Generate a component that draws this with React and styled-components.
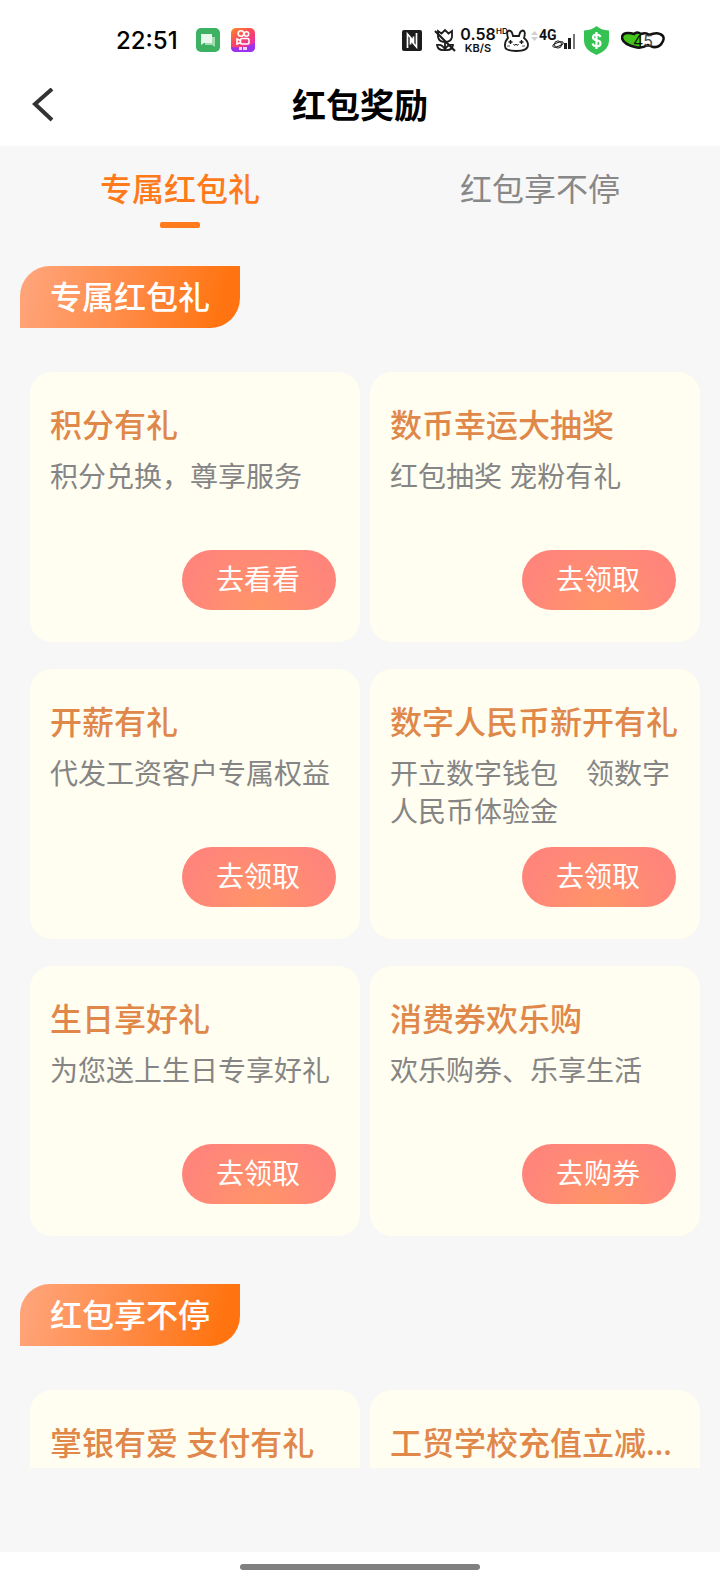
import React, { useState } from 'react';
import styled, { createGlobalStyle } from 'styled-components';

const exclusiveGifts = [
  { title: '积分有礼', desc: '积分兑换，尊享服务', action: '去看看' },
  { title: '数币幸运大抽奖', desc: '红包抽奖 宠粉有礼', action: '去领取' },
  { title: '开薪有礼', desc: '代发工资客户专属权益', action: '去领取' },
  { title: '数字人民币新开有礼', desc: '开立数字钱包　领数字人民币体验金', action: '去领取' },
  { title: '生日享好礼', desc: '为您送上生日专享好礼', action: '去领取' },
  { title: '消费券欢乐购', desc: '欢乐购券、乐享生活', action: '去购券' },
];

const endlessGifts = [
  { title: '掌银有爱 支付有礼' },
  { title: '工贸学校充值立减…' },
];

const tabs = ['专属红包礼', '红包享不停'];

const ChatIcon = () => (
  <svg width="24" height="24" viewBox="0 0 24 24" aria-hidden="true">
    <rect width="24" height="24" rx="5" fill="#3db162" />
    <path d="M9 9h10v10l-3-2H9z" fill="#a4dbb3" />
    <path d="M5 6h11v9H8l-3 2z" fill="#e9f8ec" />
  </svg>
);

const VideoIcon = () => (
  <svg width="24" height="24" viewBox="0 0 24 24" aria-hidden="true">
    <defs>
      <linearGradient id="video" x1="0" y1="0" x2="0.7" y2="1">
        <stop offset="0" stopColor="#ff8a24" />
        <stop offset="0.5" stopColor="#fb4560" />
        <stop offset="1" stopColor="#e02cc0" />
      </linearGradient>
    </defs>
    <rect width="24" height="24" rx="5" fill="url(#video)" />
    <path d="M0 19q14 2 24-4v4q0 5-5 5H5q-5 0-5-5z" fill="#9b32ec" />
    <g fill="none" stroke="#fff" strokeWidth="1.6">
      <circle cx="10" cy="5.5" r="2.8" />
      <circle cx="15.5" cy="6" r="2.2" />
      <rect x="9.5" y="10.5" width="8.5" height="5.5" rx="1.5" />
      <path d="M9.5 12.5L6 11v5l3.500-1.500" />
    </g>
    <path d="M8 19h3v3H8zM12 19h4v3h-4z" fill="#efd4ff" />
  </svg>
);

const NfcIcon = () => (
  <svg width="20" height="21" viewBox="0 0 20 21" aria-hidden="true">
    <rect width="20" height="21" rx="2" fill="#1c1c1c" />
    <path d="M5.500 18V4l6 7V6.500M14.500 3v14l-6-7v4.500" fill="none" stroke="#fff" strokeWidth="1.700" />
  </svg>
);

const FlowerIcon = () => (
  <svg width="22" height="24" viewBox="0 0 22 24" fill="none" stroke="#1c1c1c" strokeWidth="1.8" aria-hidden="true">
    <path d="M4 3l3.500 2.500L11 2l3.500 3.500L18 3v6q-1 5-7 5t-7-5zM11 14v8M11 22q-7 1-8-5 6-1 8 5zM11 22q7 1 8-5-6-1-8 5z" />
    <path d="M1 3l20 20" strokeWidth="2.200" />
  </svg>
);

const BunnyIcon = () => (
  <svg width="34" height="26" viewBox="0 0 34 26" fill="none" stroke="#1c1c1c" strokeWidth="1.800" aria-hidden="true">
    <path d="M13 11q-2-7 1-7.500 3 0 4 5.500h6q1-5.500 4-5.500 3 .5 1 7.500 4 3 4 7 0 6-12 6T10 18q0-4 3-7z" />
    <path d="M15.500 13v4M13.500 15h4M26.500 13v4M24.500 15h4" strokeWidth="1.400" />
    <path d="M18.500 17l1.200 1.500L21 17l1.300 1.500 1.200-1.500" strokeWidth="1" />
    <path d="M12 19h3M27 19h3" stroke="#aaa" />
  </svg>
);

const SignalIcon = () => (
  <svg width="44" height="28" viewBox="0 0 44 28" aria-hidden="true">
    <path d="M0 9l3.500-4L7 9zM0 11l3.500 4L7 11z" fill="#cfcfcf" />
    <g fill="none" stroke="#1c1c1c" strokeWidth="1">
      <circle cx="27" cy="18.500" r="3.600" />
      <ellipse cx="27" cy="18.500" rx="5.500" ry="1.800" transform="rotate(-20 27 18.500)" />
    </g>
    <path d="M33 17h3v6h-3zM37 12h3v11h-3z" fill="#1c1c1c" />
    <path d="M42 8h2v15h-2z" fill="#777" />
  </svg>
);

const ShieldIcon = () => (
  <svg width="27" height="29" viewBox="0 0 27 29" aria-hidden="true">
    <path d="M13.500 0Q18 4 26 4.500V15q0 9-12.500 14Q1 24 1 15V4.500Q9 4 13.500 0z" fill="#35c253" />
    <path d="M17.500 11q-1-2.500-4-2.500-3.500 0-3.500 2.800 0 2.200 3.500 2.900 4 .8 4 3.200 0 2.900-4 2.900-3.200 0-4-2.800M13.500 6v17" fill="none" stroke="#fff" strokeWidth="2.200" />
  </svg>
);

const shell = 'M14 16Q2 13 1 7q0-5 6-5 3 0 6 1 3-3 7 0 5-2 8 1 7-3 11-1 5 2 3 7-3 7-10 6-3-1-5-2-7 4-13 2z';

const BatteryIcon = () => (
  <svg width="44" height="19" viewBox="0 0 44 19" aria-hidden="true">
    <defs>
      <clipPath id="charge"><path d="M0 0h20v19H0z" /></clipPath>
    </defs>
    <path d={shell} fill="#fff" />
    <path d={shell} fill="#44c51b" clipPath="url(#charge)" />
    <path d={shell} fill="none" stroke="#111" strokeWidth="2.500" />
  </svg>
);

const GiftCard = ({ title, desc, action }) => (
  <Card>
    <CardTitle>{title}</CardTitle>
    {desc && <CardDesc>{desc}</CardDesc>}
    {action && <CardButton type="button">{action}</CardButton>}
  </Card>
);

const App = () => {
  const [active, setActive] = useState(0);

  return (
    <Page>
      <GlobalStyle />
      <StatusBar>
        <StatusLeft>
          <Clock>22:51</Clock>
          <ChatIcon />
          <VideoIcon />
        </StatusLeft>
        <StatusRight>
          <NfcIcon />
          <StatusItem $gap={12}><FlowerIcon /></StatusItem>
          <Speed>
            <SpeedValue>0.58</SpeedValue>
            <SpeedUnit>KB/S</SpeedUnit>
          </Speed>
          <StatusItem>
            <BunnyIcon />
            <Hd>HD</Hd>
          </StatusItem>
          <StatusItem $gap={2}>
            <SignalIcon />
            <Network>4G</Network>
          </StatusItem>
          <StatusItem $gap={8}><ShieldIcon /></StatusItem>
          <StatusItem $gap={11}>
            <BatteryIcon />
            <Charge>4<ChargeRest>5</ChargeRest></Charge>
          </StatusItem>
        </StatusRight>
      </StatusBar>

      <Header>
        <BackButton type="button" aria-label="返回">
          <svg width="24" height="34" viewBox="0 0 24 34" fill="none" stroke="#333" strokeWidth="4" aria-hidden="true">
            <path d="M22 1L5 16l17 16" />
          </svg>
        </BackButton>
        <Title>红包奖励</Title>
      </Header>

      <Tabs>
        {tabs.map((tab, i) => (
          <Tab key={tab} type="button" $active={i === active} onClick={() => setActive(i)}>
            {tab}
          </Tab>
        ))}
      </Tabs>

      <Content>
        <Section>
          <SectionLabel>专属红包礼</SectionLabel>
          <Grid>
            {exclusiveGifts.map((gift) => <GiftCard key={gift.title} {...gift} />)}
          </Grid>
        </Section>
        <Section>
          <SectionLabel>红包享不停</SectionLabel>
          <Grid>
            {endlessGifts.map((gift) => <GiftCard key={gift.title} {...gift} />)}
          </Grid>
        </Section>
      </Content>

      <HomeBar>
        <HomeHandle />
      </HomeBar>
    </Page>
  );
};

const GlobalStyle = createGlobalStyle`
  * {
    box-sizing: border-box;
  }

  body {
    margin: 0;
    font-family: "Noto Sans", "Noto Sans CJK SC", sans-serif;
    background: #f7f7f7;
  }

  button {
    font-family: inherit;
    border: 0;
    padding: 0;
    background: none;
    cursor: pointer;
  }

  svg {
    display: block;
    flex: none;
  }
`;

const Page = styled.div`
  height: 100vh;
  display: flex;
  flex-direction: column;
  background: #f7f7f7;
`;

const StatusBar = styled.div`
  display: flex;
  justify-content: space-between;
  align-items: center;
  height: 64px;
  flex: none;
  padding: 16px 55px 0 116px;
  background: #fff;
  font-family: Inter, sans-serif;
  color: #111;
`;

const StatusLeft = styled.div`
  display: flex;
  align-items: center;
  gap: 11px;
`;

const Clock = styled.time`
  width: 69px;
  padding-top: 2px;
  font-size: 24px;
  font-weight: 500;
  line-height: 30px;
  color: #000;
`;

const StatusRight = styled.div`
  display: flex;
  align-items: center;
`;

const StatusItem = styled.div`
  position: relative;
  margin-left: ${({ $gap }) => $gap || 0}px;
`;

const Speed = styled.div`
  width: 34px;
  margin-left: 5px;
  display: flex;
  flex-direction: column;
  align-items: center;
  font-weight: 600;
`;

const SpeedValue = styled.span`
  font-size: 16px;
  line-height: 16px;
`;

const SpeedUnit = styled.span`
  font-size: 11px;
  line-height: 13px;
`;

const Hd = styled.span`
  position: absolute;
  top: 0;
  left: 1px;
  font-size: 8px;
  font-weight: 600;
  line-height: 8px;
`;

const Network = styled.span`
  position: absolute;
  top: 2px;
  left: 8px;
  font-family: Roboto, sans-serif;
  font-size: 14px;
  font-weight: 700;
  line-height: 14px;
`;

const Charge = styled.span`
  position: absolute;
  top: 2px;
  left: 12px;
  font-size: 16px;
  line-height: 16px;
`;

const ChargeRest = styled.span`
  color: #444;
`;

const Header = styled.header`
  display: grid;
  grid-template-columns: 1fr auto 1fr;
  align-items: center;
  height: 82px;
  flex: none;
  padding: 0 30px;
  background: #fff;
`;

const BackButton = styled.button`
  justify-self: start;
`;

const Title = styled.h1`
  margin: 0;
  font-size: 34px;
  font-weight: 700;
  line-height: 44px;
  color: #000;
`;

const Tabs = styled.nav`
  display: flex;
  flex: none;
  padding-top: 21px;
`;

const Tab = styled.button`
  flex: 1;
  display: flex;
  flex-direction: column;
  align-items: center;
  gap: 11px;
  font-size: 32px;
  line-height: 44px;
  font-weight: ${({ $active }) => ($active ? 500 : 400)};
  color: ${({ $active }) => ($active ? '#ff7a1a' : '#888')};

  &::after {
    content: '';
    width: 40px;
    height: 6px;
    border-radius: 2px;
    background: ${({ $active }) => ($active ? '#ff7a1a' : 'transparent')};
  }
`;

const Content = styled.main`
  flex: 1;
  min-height: 0;
  overflow-y: auto;
  scrollbar-width: none;
  padding: 38px 20px 0;
  margin-bottom: 84px;
`;

const Section = styled.section`
  margin-bottom: 48px;
`;

const SectionLabel = styled.h2`
  width: fit-content;
  margin: 0 0 44px;
  padding: 0 30px;
  font-size: 32px;
  font-weight: 500;
  line-height: 62px;
  color: #fff;
  border-radius: 30px 0;
  background: linear-gradient(105deg, #ffa67e, #ff8a45 50%, #ff7410 90%);
`;

const Grid = styled.div`
  display: grid;
  grid-template-columns: 1fr 1fr;
  gap: 27px 10px;
  padding-left: 10px;
`;

const Card = styled.article`
  display: flex;
  flex-direction: column;
  min-width: 0;
  min-height: 270px;
  padding: 31px 20px 32px;
  border-radius: 22px;
  background: #fffef1;
`;

const CardTitle = styled.h3`
  margin: 0 0 10px;
  font-size: 32px;
  font-weight: 500;
  line-height: 44px;
  color: #e0874a;
  white-space: nowrap;
  overflow: hidden;
  text-overflow: ellipsis;
`;

const CardDesc = styled.p`
  margin: 0;
  font-size: 28px;
  font-weight: 400;
  line-height: 38px;
  color: #858585;
`;

const CardButton = styled.button`
  align-self: flex-end;
  width: 154px;
  height: 60px;
  margin: auto 4px 0 0;
  padding: 0 2px 3px 0;
  border-radius: 30px;
  font-size: 28px;
  line-height: 38px;
  color: #fff;
  background: radial-gradient(circle at 50% 100%, #ff9567, #ff857b 75px);
`;

const HomeBar = styled.footer`
  display: flex;
  justify-content: center;
  height: 32px;
  flex: none;
  padding-top: 12px;
  background: #fff;
`;

const HomeHandle = styled.div`
  width: 33.333%;
  height: 6px;
  border-radius: 3px;
  background: #808080;
`;

export default App;
